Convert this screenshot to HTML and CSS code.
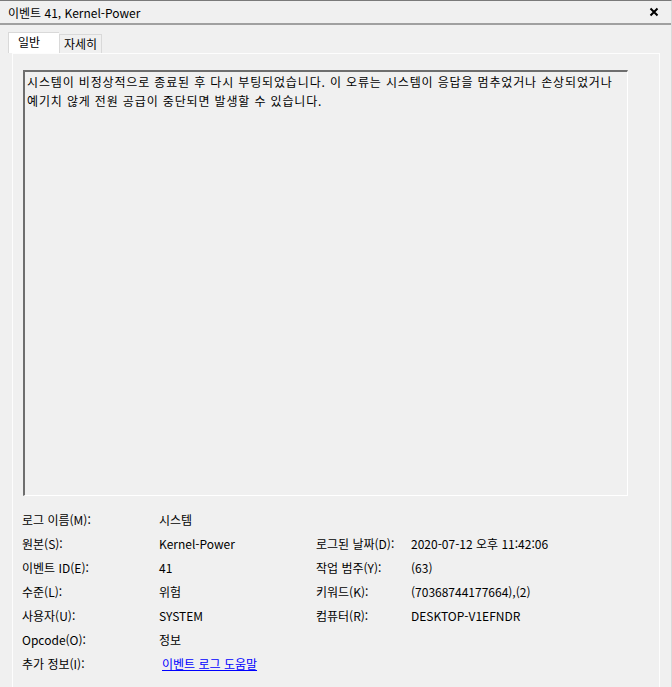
FILE: index.html
```html
<!DOCTYPE html>
<html lang="ko">
<head>
  <meta charset="UTF-8" />
  <title>이벤트 41, Kernel-Power</title>
  <link rel="stylesheet" href="styles.css">
</head>
<body>
  <div class="window">
    <div class="titlebar">
      <span class="title">이벤트 41, Kernel-Power</span>
      <svg class="close" width="10" height="10" viewBox="0 0 10 10">
        <path d="M1.5 1.5 L8.5 8.5 M8.5 1.5 L1.5 8.5" stroke="#000" stroke-width="2" />
      </svg>
    </div>
    <div class="tabs">
      <div class="tab active">일반</div>
      <div class="tab">자세히</div>
    </div>
    <div class="tabpage">
      <div class="desc">시스템이 비정상적으로 종료된 후 다시 부팅되었습니다. 이 오류는 시스템이 응답을 멈추었거나 손상되었거나 예기치 않게 전원 공급이 중단되면 발생할 수 있습니다.</div>
      <div class="info">
        <span>로그 이름(M):</span><span>시스템</span><span></span><span></span>
        <span>원본(S):</span><span>Kernel-Power</span><span>로그된 날짜(D):</span><span>2020-07-12 오후 11:42:06</span>
        <span>이벤트 ID(E):</span><span>41</span><span>작업 범주(Y):</span><span>(63)</span>
        <span>수준(L):</span><span>위험</span><span>키워드(K):</span><span>(70368744177664),(2)</span>
        <span>사용자(U):</span><span>SYSTEM</span><span>컴퓨터(R):</span><span>DESKTOP-V1EFNDR</span>
        <span>Opcode(O):</span><span>정보</span><span></span><span></span>
        <span>추가 정보(I):</span><span><a class="link" href="#">이벤트 로그 도움말</a></span><span></span><span></span>
      </div>
    </div>
  </div>
</body>
</html>
```

FILE: styles.css
```css
html, body {
  margin: 0;
  background-color: #f0f0f0;
}
body {
  font-family: "Noto Sans CJK KR", "Noto Sans", sans-serif;
  font-size: 12px;
  color: #000;
}
.window {
  width: 671px;
  height: 686px;
  border-top: 1px solid #7a7a7a;
  border-right: 1px solid #dadada;
  overflow: hidden;
}
.titlebar {
  height: 22px;
  display: flex;
  align-items: center;
  justify-content: space-between;
  padding: 0 12px 0 8px;
  border-bottom: 2px solid #a0a0a0;
}
.close {
  display: block;
}
.tabs {
  display: flex;
  margin-top: 7px;
  padding-left: 8px;
  height: 21px;
  align-items: flex-end;
}
.tab {
  height: 19px;
  line-height: 18px;
  padding: 0 4px;
  border: 1px solid #d9d9d9;
  border-bottom: none;
  background-color: #f0f0f0;
  box-sizing: border-box;
}
.tab.active {
  height: 21px;
  width: 51px;
  padding-left: 9px;
  background-color: #fff;
  border-right: none;
}
.tabpage {
  margin-left: 12px;
  width: 648px;
  height: 700px;
  padding: 16px 0 0 10px;
  box-sizing: border-box;
  border-width: 1px 1px 0 1px;
  border-style: solid;
  border-color: #fdfdfd;
}
.desc {
  width: 605px;
  height: 426px;
  box-sizing: border-box;
  border-style: solid;
  border-width: 2px 1px 1px 2px;
  border-color: #6e6e6e #fff #fff #6e6e6e;
  padding: 0 4px 0 2px;
  line-height: 19px;
  letter-spacing: 0.85px;
  word-break: keep-all;
}
.info {
  display: grid;
  grid-template-columns: 137px 157px 95px auto;
  grid-auto-rows: 24px;
  align-items: center;
  margin-top: 11px;
  margin-left: -1px;
}
.link {
  color: #0000ff;
  text-decoration: underline;
  margin-left: 3px;
}
```
